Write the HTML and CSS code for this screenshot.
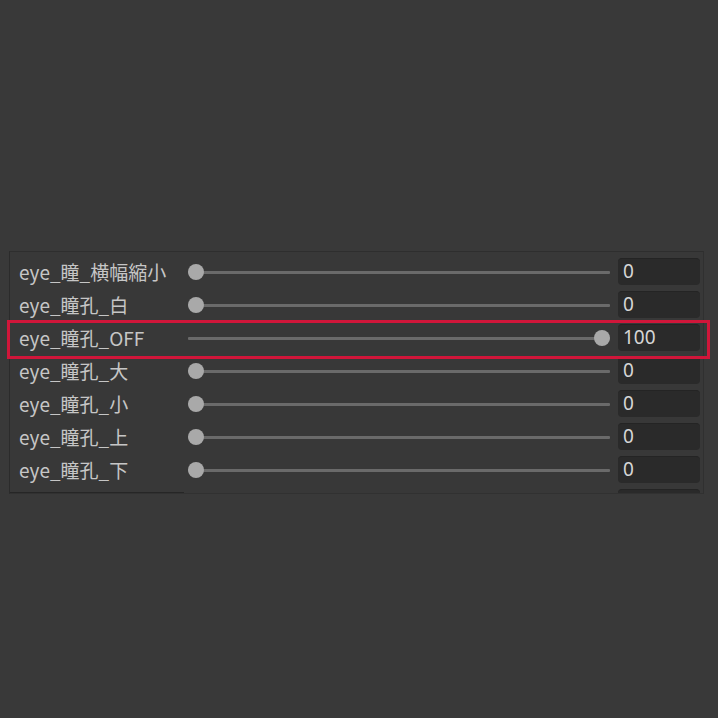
FILE: index.html
```html
<!DOCTYPE html>
<html lang="ja">
<head>
<meta charset="utf-8">
<title>Shape keys</title>
<link rel="stylesheet" href="styles.css">
</head>
<body>
<div class="stage">
  <div class="panel">
    <div class="rows">
      <div class="row">
        <div class="label">eye_瞳_縦幅縮小</div>
        <div class="slider"><div class="track"></div><div class="knob" style="left:0%"></div></div>
        <div class="field">0</div>
      </div>
      <div class="row">
        <div class="label">eye_瞳_横幅縮小</div>
        <div class="slider"><div class="track"></div><div class="knob" style="left:0%"></div></div>
        <div class="field">0</div>
      </div>
      <div class="row">
        <div class="label">eye_瞳孔_白</div>
        <div class="slider"><div class="track"></div><div class="knob" style="left:0%"></div></div>
        <div class="field">0</div>
      </div>
      <div class="row">
        <div class="label">eye_瞳孔_OFF</div>
        <div class="slider"><div class="track"></div><div class="knob max" style="left:100%"></div></div>
        <div class="field">100</div>
      </div>
      <div class="row">
        <div class="label">eye_瞳孔_大</div>
        <div class="slider"><div class="track"></div><div class="knob" style="left:0%"></div></div>
        <div class="field">0</div>
      </div>
      <div class="row">
        <div class="label">eye_瞳孔_小</div>
        <div class="slider"><div class="track"></div><div class="knob" style="left:0%"></div></div>
        <div class="field">0</div>
      </div>
      <div class="row">
        <div class="label">eye_瞳孔_上</div>
        <div class="slider"><div class="track"></div><div class="knob" style="left:0%"></div></div>
        <div class="field">0</div>
      </div>
      <div class="row">
        <div class="label">eye_瞳孔_下</div>
        <div class="slider"><div class="track"></div><div class="knob" style="left:0%"></div></div>
        <div class="field">0</div>
      </div>
      <div class="row">
        <div class="label">eye_瞳孔_左</div>
        <div class="slider"><div class="track"></div><div class="knob" style="left:0%"></div></div>
        <div class="field">0</div>
      </div>
    </div>
  </div>
  <div class="highlight"></div>
</div>
</body>
</html>
```

FILE: styles.css
```css
* { box-sizing: border-box; }
html, body {
  margin: 0;
  padding: 0;
  background: #393939;
  width: 718px;
  height: 718px;
  overflow: hidden;
  font-family: "Noto Sans CJK JP", "Noto Sans", sans-serif;
}
.stage {
  position: relative;
  padding-top: 251px;
  padding-left: 9px;
  width: 718px;
  height: 718px;
}
.panel {
  position: relative;
  width: 695px;
  height: 243px;
  border-top: 1px solid #2e2e2e;
  border-left: 1px solid #2b2b2b;
  border-right: 1px solid #303030;
  border-bottom: 1px solid #313131;
  background: #383838;
  overflow: hidden;
}
.panel::after {
  content: "";
  position: absolute;
  left: 0;
  bottom: 0;
  width: 174px;
  height: 1px;
  background: #262626;
}
.rows {
  margin-top: -30px;
  display: flex;
  flex-direction: column;
}
.row {
  height: 33px;
  display: grid;
  grid-template-columns: 177px 431px 82px;
  align-items: center;
}
.label {
  padding-left: 9px;
  font-size: 19px;
  color: #c6c6c6;
  white-space: nowrap;
  line-height: 1;
}
.slider {
  position: relative;
  height: 16px;
  margin: 0 8px 0 1px;
}
.track {
  position: absolute;
  left: 0;
  right: 0;
  top: 7px;
  height: 3px;
  background: #6a6a6a;
  border-radius: 1px;
}
.knob {
  position: absolute;
  top: 0;
  width: 16px;
  height: 16px;
  border-radius: 50%;
  background: #a9a9a9;
}
.knob.max { margin-left: -16px; }
.field {
  height: 27px;
  background: #2a2a2a;
  border-top: 1px solid #242424;
  border-radius: 4px;
  color: #d6d6d6;
  font-size: 19px;
  line-height: 25px;
  padding-left: 5px;
  font-family: "Noto Sans", sans-serif;
}
.highlight {
  position: absolute;
  left: 7px;
  top: 320px;
  width: 703px;
  height: 39px;
  border: 3px solid #d0163a;
}
```
